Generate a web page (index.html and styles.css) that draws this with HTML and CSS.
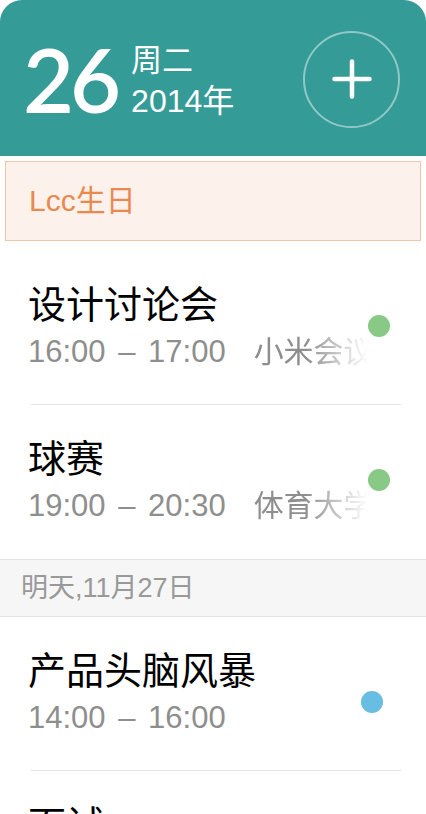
FILE: index.html
```html
<!DOCTYPE html>
<html lang="zh-CN">
<head>
<meta charset="utf-8">
<title>日程</title>
<link rel="stylesheet" href="styles.css">
</head>
<body>
<div class="screen">
  <header class="header">
    <div class="day">26</div>
    <div class="date">
      <div class="date-line">周二</div>
      <div class="date-line date-year">2014年</div>
    </div>
    <button class="add" type="button" aria-label="添加">
      <svg width="40" height="40" viewBox="0 0 40 40" aria-hidden="true">
        <path d="M20 2.5 V37.5 M2.5 20 H37.5" stroke="#fff" stroke-width="4.5" stroke-linecap="round" fill="none"/>
      </svg>
    </button>
  </header>

  <div class="allday">Lcc生日</div>

  <ul class="events events-first">
    <li class="event">
      <div class="info">
        <div class="title">设计讨论会</div>
        <div class="meta"><span class="time">16:00 – 17:00</span><span class="place">小米会议室</span></div>
      </div>
      <span class="dot dot-green"></span>
    </li>
    <li class="event event-last">
      <div class="info">
        <div class="title">球赛</div>
        <div class="meta"><span class="time">19:00 – 20:30</span><span class="place">体育大学</span></div>
      </div>
      <span class="dot dot-green"></span>
    </li>
  </ul>

  <div class="section">明天,11月27日</div>

  <ul class="events">
    <li class="event">
      <div class="info">
        <div class="title">产品头脑风暴</div>
        <div class="meta"><span class="time">14:00 – 16:00</span></div>
      </div>
      <span class="dot dot-blue"></span>
    </li>
    <li class="event">
      <div class="info">
        <div class="title">面试</div>
        <div class="meta"><span class="time">10:00 – 11:00</span></div>
      </div>
      <span class="dot dot-green"></span>
    </li>
  </ul>
</div>
</body>
</html>
```

FILE: styles.css
```css
* { box-sizing: border-box; }

html, body {
  margin: 0;
  padding: 0;
  background: #ffffff;
  height: 814px;
  overflow: hidden;
}

body {
  font-family: "Liberation Sans", "Noto Sans CJK SC", sans-serif;
  color: #000;
}

.screen {
  width: 426px;
}

.header {
  height: 156px;
  background: #349b97;
  border-radius: 22px 22px 0 0;
  display: flex;
  align-items: center;
  padding: 2px 26px 0 23px;
  color: #fff;
}

.day {
  font-family: "Lato", sans-serif;
  font-weight: 600;
  font-size: 88px;
  line-height: 1;
  letter-spacing: -4px;
  margin-right: 14px;
}

.date {
  display: flex;
  flex-direction: column;
  padding-top: 4px;
}

.date-line {
  font-size: 31px;
  line-height: 41px;
}

.date-year {
  font-size: 32px;
}

.add {
  margin-left: auto;
  width: 97px;
  height: 97px;
  border-radius: 50%;
  border: 2px solid rgba(255, 255, 255, 0.45);
  background: transparent;
  display: flex;
  align-items: center;
  justify-content: center;
  padding: 0;
}

.allday {
  margin: 5px 5px 0;
  height: 80px;
  background: #fdf1ec;
  border: 1px solid #f0c7aa;
  color: #e8894e;
  font-size: 30px;
  line-height: 78px;
  padding-left: 23px;
}

.events {
  list-style: none;
  margin: 0;
  padding: 0;
}

.events-first {
  margin-top: 10px;
}

.event {
  position: relative;
  display: flex;
  padding: 31px 0 29px 28px;
}

.event::after {
  content: "";
  position: absolute;
  left: 31px;
  right: 25px;
  bottom: 0;
  height: 1px;
  background: #e4e4e4;
}

.event-last::after {
  display: none;
}

.info {
  flex: 1;
  min-width: 0;
}

.title {
  font-size: 38px;
  line-height: 46px;
  color: #000;
}

.meta {
  display: flex;
  font-size: 31px;
  line-height: 48px;
  color: #8e8e8e;
  white-space: nowrap;
}

.time {
  word-spacing: 4px;
}

.place {
  margin-left: 28px;
  width: 120px;
  overflow: hidden;
  font-size: 30px;
  -webkit-mask-image: linear-gradient(to right, #000 45%, transparent 100%);
  mask-image: linear-gradient(to right, #000 45%, transparent 100%);
}

.dot {
  flex: none;
  width: 22px;
  height: 22px;
  border-radius: 50%;
  margin-top: 33px;
  margin-right: 36px;
}

.dot-green {
  background: #88c985;
}

.dot-blue {
  background: #68bde2;
  margin-top: 43px;
  margin-right: 43px;
}

.section {
  height: 58px;
  background: #f6f6f6;
  border-top: 1px solid #e3e3e3;
  border-bottom: 1px solid #e3e3e3;
  color: #999;
  font-size: 27px;
  line-height: 56px;
  padding-left: 21px;
}
```
